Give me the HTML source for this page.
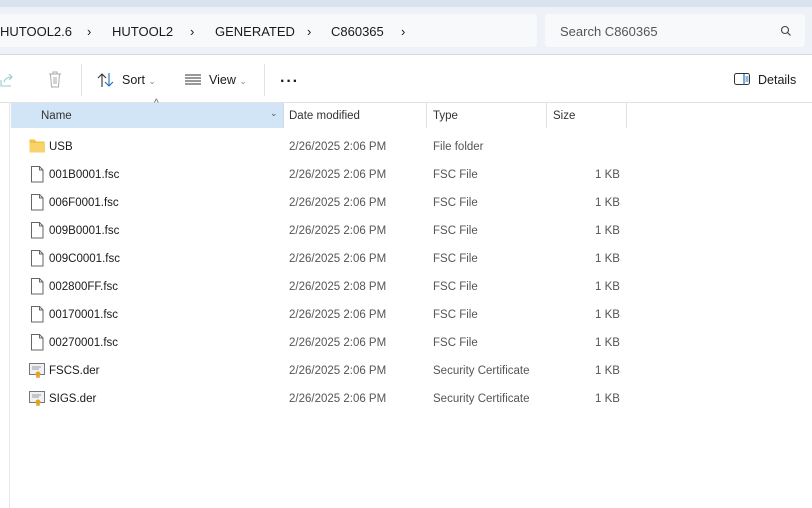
<!DOCTYPE html>
<html><head><style>
*{margin:0;padding:0;box-sizing:border-box}
body{width:812px;height:508px;overflow:hidden;background:#fff;font-family:"Liberation Sans",sans-serif;font-size:12px;color:#1a1a1a;position:relative}
.a{position:absolute}
.top{left:0;top:0;width:812px;height:7px;background:#d9e3ef}
.bar{left:0;top:7px;width:812px;height:48px;background:#eef2f8;border-bottom:1px solid #d6d9de}
.crumb{left:-10px;top:14px;width:547px;height:33px;background:#f8f9fb;border-radius:4px}
.search{left:545px;top:14px;width:260px;height:33px;background:#f8f9fb;border-radius:4px}
.bc{top:24px;font-size:13px;color:#1a1a1a}
.tb{top:73px;font-size:12.5px}
.sep{width:1px;background:#e3e3e3}
.hdr{height:25px;font-size:11.5px;color:#333}
.row{height:28px;width:800px;left:0;font-size:11.5px}
.row span{position:absolute;top:9px}
.gray{color:#555}
</style></head><body>
<div class="a top"></div>
<div class="a bar"></div>
<div class="a crumb"></div>
<div class="a search"></div>
<div class="a bc" style="left:0">HUTOOL2.6</div>
<div class="a bc" style="left:87px">›</div>
<div class="a bc" style="left:112px">HUTOOL2</div>
<div class="a bc" style="left:190px">›</div>
<div class="a bc" style="left:215px">GENERATED</div>
<div class="a bc" style="left:307px">›</div>
<div class="a bc" style="left:331px">C860365</div>
<div class="a bc" style="left:401px">›</div>
<div class="a bc" style="left:560px;color:#555">Search C860365</div>
<svg class="a" style="left:780px;top:25px" width="12" height="12" viewBox="0 0 12 12"><circle cx="5" cy="5" r="3.5" fill="none" stroke="#444" stroke-width="1.1"/><path d="M7.5 7.5 10.5 10.5" stroke="#444" stroke-width="1.2"/></svg>
<svg class="a" style="left:0;top:72px" width="14" height="16"><path d="M1 8v6h10M4 10c1-4 4-5 8-5M9 2l3 3-3 3" fill="none" stroke="#9cc" stroke-width="1.1"/></svg>
<svg class="a" style="left:48px;top:71px" width="14" height="17"><path d="M1 3h12M5 3V1h4v2M2.5 3l1 13h7l1-13M6 6v7M8 6v7" fill="none" stroke="#aaa" stroke-width="1"/></svg>
<div class="a sep" style="left:81px;top:64px;height:32px"></div>
<svg class="a" style="left:97px;top:72px" width="18" height="16"><path d="M5 15V2M1 6l4-4 4 4" fill="none" stroke="#333" stroke-width="1.1"/><path d="M12 1v13M8 10l4 4 4-4" fill="none" stroke="#1f6fc0" stroke-width="1.1"/></svg>
<div class="a tb" style="left:122px">Sort <span style="font-size:9px;color:#888">⌄</span></div>
<svg class="a" style="left:185px;top:74px" width="17" height="11"><path d="M0 1h16M0 4h16M0 7h16M0 10h16" stroke="#333" stroke-width="1"/></svg>
<div class="a tb" style="left:209px">View <span style="font-size:9px;color:#888">⌄</span></div>
<div class="a sep" style="left:264px;top:64px;height:32px"></div>
<div class="a" style="left:280px;top:73px;font-size:16px;font-weight:bold;letter-spacing:1px">···</div>
<svg class="a" style="left:734px;top:73px" width="17" height="13"><rect x="0.5" y="0.5" width="15" height="11" rx="2" fill="none" stroke="#333"/><path d="M10 1v11" stroke="#1f6fc0" stroke-width="1.2"/><path d="M11.5 4h3M11.5 6h3M11.5 8h3" stroke="#1f6fc0"/></svg>
<div class="a tb" style="left:758px">Details</div>
<div class="a" style="left:0;top:102px;width:812px;height:1px;background:#e2e2e2"></div>
<div class="a" style="left:9px;top:103px;width:1px;height:405px;background:#e6e6e6"></div>
<div class="a" style="left:11px;top:103px;width:272px;height:25px;background:#d2e5f6"></div>
<div class="a" style="left:283px;top:103px;width:1px;height:25px;background:#d0d8e0"></div>
<div class="a" style="left:426px;top:103px;width:1px;height:25px;background:#e2e2e2"></div>
<div class="a" style="left:546px;top:103px;width:1px;height:25px;background:#e2e2e2"></div>
<div class="a" style="left:626px;top:103px;width:1px;height:25px;background:#e2e2e2"></div>
<div class="a" style="left:154px;top:98px;font-size:10px;color:#555">^</div>
<div class="a" style="left:270px;top:108px;font-size:9px;color:#555">⌄</div>
<div class="a hdr" style="left:41px;top:110px">Name</div>
<div class="a hdr" style="left:289px;top:110px">Date modified</div>
<div class="a hdr" style="left:433px;top:110px">Type</div>
<div class="a hdr" style="left:553px;top:110px">Size</div>

<div class="a row" style="top:132px"><svg class="a" style="left:29px;top:7px" width="17" height="14"><path d="M0.5 2a1 1 0 0 1 1-1.5h4l2 2h8v10.5h-15z" fill="#f3c443"/><path d="M0.5 4h15.5v9.5h-15.5z" fill="#f8d36a"/></svg><span style="left:49px">USB</span><span class="gray" style="left:289px">2/26/2025 2:06 PM</span><span class="gray" style="left:433px">File folder</span></div>
<div class="a row" style="top:160px"><svg class="a" style="left:31px;top:6px" width="13" height="17"><path d="M0.5 0.5h8l3.5 3.5v12h-11.5z M8.5 0.5v3.5h3.5" fill="#fff" stroke="#666"/></svg><span style="left:49px">001B0001.fsc</span><span class="gray" style="left:289px">2/26/2025 2:06 PM</span><span class="gray" style="left:433px">FSC File</span><span class="gray" style="left:595px">1 KB</span></div>
<div class="a row" style="top:188px"><svg class="a" style="left:31px;top:6px" width="13" height="17"><path d="M0.5 0.5h8l3.5 3.5v12h-11.5z M8.5 0.5v3.5h3.5" fill="#fff" stroke="#666"/></svg><span style="left:49px">006F0001.fsc</span><span class="gray" style="left:289px">2/26/2025 2:06 PM</span><span class="gray" style="left:433px">FSC File</span><span class="gray" style="left:595px">1 KB</span></div>
<div class="a row" style="top:216px"><svg class="a" style="left:31px;top:6px" width="13" height="17"><path d="M0.5 0.5h8l3.5 3.5v12h-11.5z M8.5 0.5v3.5h3.5" fill="#fff" stroke="#666"/></svg><span style="left:49px">009B0001.fsc</span><span class="gray" style="left:289px">2/26/2025 2:06 PM</span><span class="gray" style="left:433px">FSC File</span><span class="gray" style="left:595px">1 KB</span></div>
<div class="a row" style="top:244px"><svg class="a" style="left:31px;top:6px" width="13" height="17"><path d="M0.5 0.5h8l3.5 3.5v12h-11.5z M8.5 0.5v3.5h3.5" fill="#fff" stroke="#666"/></svg><span style="left:49px">009C0001.fsc</span><span class="gray" style="left:289px">2/26/2025 2:06 PM</span><span class="gray" style="left:433px">FSC File</span><span class="gray" style="left:595px">1 KB</span></div>
<div class="a row" style="top:272px"><svg class="a" style="left:31px;top:6px" width="13" height="17"><path d="M0.5 0.5h8l3.5 3.5v12h-11.5z M8.5 0.5v3.5h3.5" fill="#fff" stroke="#666"/></svg><span style="left:49px">002800FF.fsc</span><span class="gray" style="left:289px">2/26/2025 2:08 PM</span><span class="gray" style="left:433px">FSC File</span><span class="gray" style="left:595px">1 KB</span></div>
<div class="a row" style="top:300px"><svg class="a" style="left:31px;top:6px" width="13" height="17"><path d="M0.5 0.5h8l3.5 3.5v12h-11.5z M8.5 0.5v3.5h3.5" fill="#fff" stroke="#666"/></svg><span style="left:49px">00170001.fsc</span><span class="gray" style="left:289px">2/26/2025 2:06 PM</span><span class="gray" style="left:433px">FSC File</span><span class="gray" style="left:595px">1 KB</span></div>
<div class="a row" style="top:328px"><svg class="a" style="left:31px;top:6px" width="13" height="17"><path d="M0.5 0.5h8l3.5 3.5v12h-11.5z M8.5 0.5v3.5h3.5" fill="#fff" stroke="#666"/></svg><span style="left:49px">00270001.fsc</span><span class="gray" style="left:289px">2/26/2025 2:06 PM</span><span class="gray" style="left:433px">FSC File</span><span class="gray" style="left:595px">1 KB</span></div>
<div class="a row" style="top:356px"><svg class="a" style="left:29px;top:7px" width="17" height="15"><rect x="0.5" y="0.5" width="15" height="11" fill="#eef2f6" stroke="#777"/><path d="M3 4h9M3 6h7" stroke="#999"/><circle cx="9" cy="11" r="2.5" fill="#e8a317"/><path d="M8 13v2M10 13v2" stroke="#c07a00"/></svg><span style="left:49px">FSCS.der</span><span class="gray" style="left:289px">2/26/2025 2:06 PM</span><span class="gray" style="left:433px">Security Certificate</span><span class="gray" style="left:595px">1 KB</span></div>
<div class="a row" style="top:384px"><svg class="a" style="left:29px;top:7px" width="17" height="15"><rect x="0.5" y="0.5" width="15" height="11" fill="#eef2f6" stroke="#777"/><path d="M3 4h9M3 6h7" stroke="#999"/><circle cx="9" cy="11" r="2.5" fill="#e8a317"/><path d="M8 13v2M10 13v2" stroke="#c07a00"/></svg><span style="left:49px">SIGS.der</span><span class="gray" style="left:289px">2/26/2025 2:06 PM</span><span class="gray" style="left:433px">Security Certificate</span><span class="gray" style="left:595px">1 KB</span></div>
</body></html>
